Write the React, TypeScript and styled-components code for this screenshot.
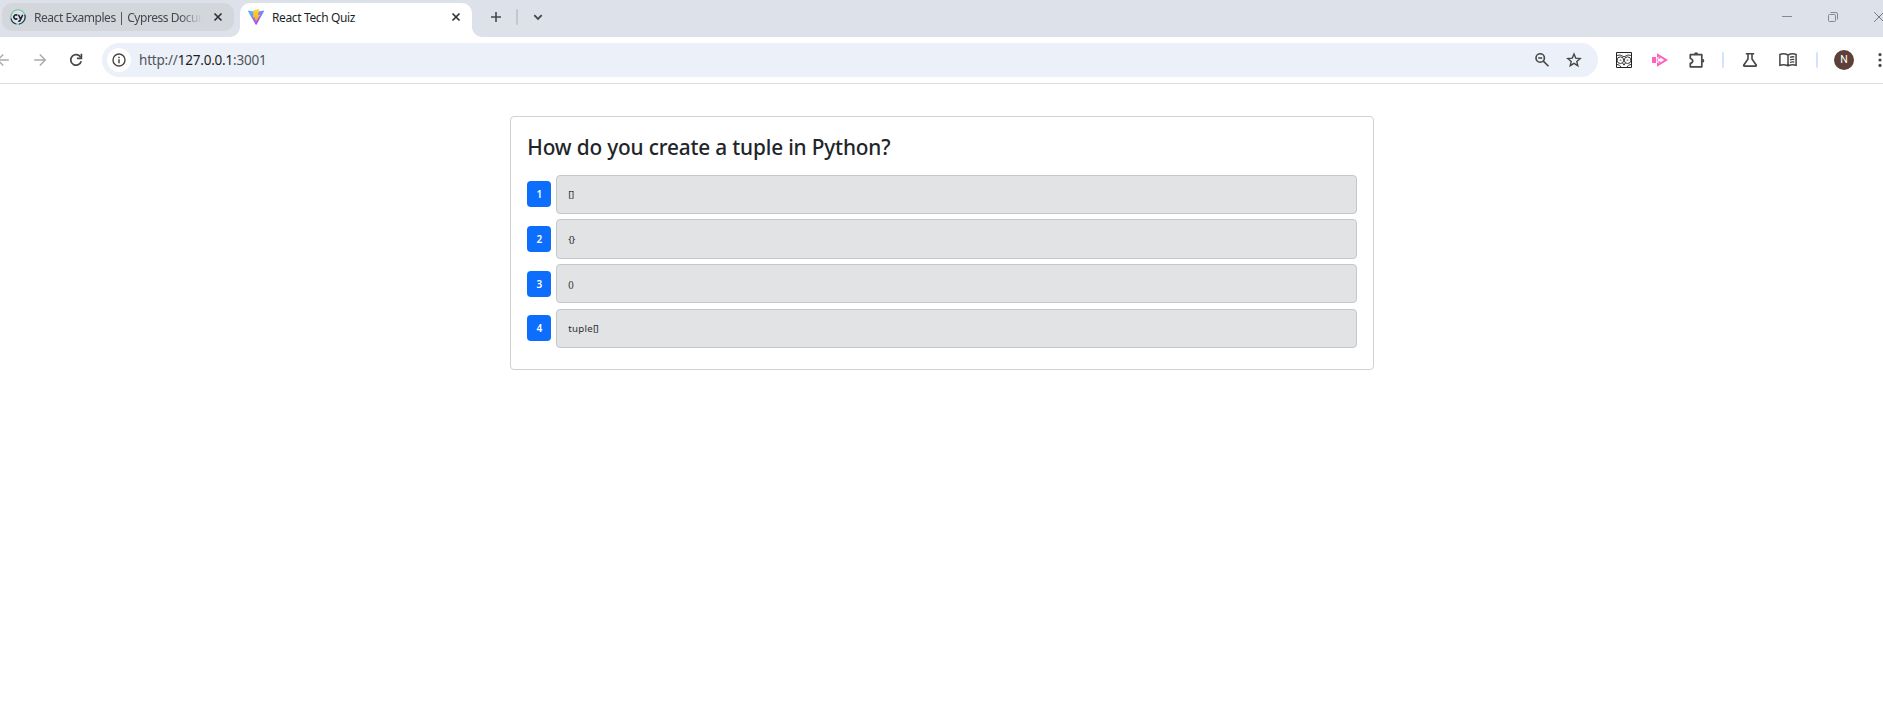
import React from "react";
import styled, { createGlobalStyle, css } from "styled-components";

const GlobalStyle = createGlobalStyle`
  * { box-sizing: border-box; }
  body { margin: 0; background: #fff; overflow: hidden; }
  #root { font-family: "Noto Sans", "Open Sans", sans-serif; color: #212529; }
`;

const Window = styled.div`
  display: flex;
  flex-direction: column;
  width: 100%;
  height: 712px;
  overflow: hidden;
  background: #fff;
`;

const TabStrip = styled.header`
  display: flex;
  align-items: flex-start;
  flex: none;
  height: 37px;
  padding: 3px 0 0 2px;
  background: #dde1e9;
  overflow: hidden;
`;

const Tab = styled.div<{ $active?: boolean }>`
  position: relative;
  display: flex;
  align-items: center;
  flex: none;
  width: 232px;
  height: 28px;
  padding: 0 8px;
  border-radius: 10px;
  background: #d3d7dc;
  color: #45484b;
  font-size: 12px;
  ${(p) =>
    p.$active &&
    css`
      height: 34px;
      margin-left: 6px;
      padding-bottom: 6px;
      border-radius: 10px 10px 0 0;
      background: #fff;
      color: #1f1f1f;
      &::before,
      &::after {
        content: "";
        position: absolute;
        bottom: 0;
        width: 10px;
        height: 10px;
      }
      &::before {
        left: -10px;
        background: radial-gradient(circle at 0 0, transparent 9.5px, #fff 10.2px);
      }
      &::after {
        right: -10px;
        background: radial-gradient(circle at 100% 0, transparent 9.5px, #fff 10.2px);
      }
    `}
`;

const TabTitle = styled.span<{ $fade?: boolean; $spacing: number }>`
  flex: 1;
  margin: 1px 8px 0;
  overflow: hidden;
  white-space: nowrap;
  line-height: 18px;
  letter-spacing: ${(p) => p.$spacing}px;
  ${(p) =>
    p.$fade &&
    css`
      mask-image: linear-gradient(to right, #000 146px, transparent 168px);
    `}
`;

const Slot = styled.span<{ $w: number }>`
  display: flex;
  align-items: center;
  justify-content: center;
  flex: none;
  width: ${(p) => p.$w}px;
  height: 28px;
`;

const NewTabSlot = styled(Slot)`
  margin-left: 4px;
`;

const Divider = styled.span<{ $color: string }>`
  width: 2px;
  height: 16px;
  border-radius: 1px;
  background: ${(p) => p.$color};
`;

const WindowControls = styled.div`
  display: flex;
  margin-left: auto;
  margin-right: -19px;
`;

const Toolbar = styled.nav`
  display: flex;
  align-items: center;
  flex: none;
  height: 47px;
  border-bottom: 1px solid #dcdfe3;
`;

const NavButtons = styled.div`
  display: flex;
  flex: none;
  width: 102px;
`;

const BackSlot = styled(Slot)`
  margin-left: -15px;
`;

const AddressBar = styled.div`
  display: flex;
  align-items: center;
  flex: none;
  width: 1496px;
  height: 34px;
  padding: 0 8px 0 5px;
  border-radius: 17px;
  background: #ecf0f9;
`;

const SiteInfo = styled.span`
  display: flex;
  align-items: center;
  justify-content: center;
  width: 24px;
  height: 24px;
  border-radius: 50%;
  background: #fff;
`;

const Url = styled.span`
  flex: 1;
  margin-left: 8px;
  color: #50545a;
  font-size: 13.5px;
  line-height: 20px;
  letter-spacing: -0.2px;
  b {
    color: #1f1f1f;
    font-weight: 400;
  }
`;

const Extensions = styled.div`
  display: flex;
  flex: none;
  margin-left: 8px;
`;

const Avatar = styled.span`
  width: 20px;
  height: 20px;
  border-radius: 50%;
  background: #5d4037;
  color: #fff;
  font: 10.5px/20px Roboto, sans-serif;
  text-align: center;
`;

const Page = styled.main`
  display: flex;
  justify-content: center;
  align-items: flex-start;
  flex: 1;
  padding: 32px 0 0 1px;
`;

const Card = styled.section`
  width: 863.5px;
  height: 254px;
  padding: 16.3px 16px 0;
  border: 1px solid #cfd1d3;
  border-radius: 4px;
`;

const Question = styled.h2`
  margin: 0 0 11.37px;
  height: 30px;
  font-size: 20.8px;
  font-weight: 500;
  line-height: 28px;
  letter-spacing: -0.16px;
  white-space: nowrap;
`;

const Answers = styled.div`
  display: grid;
  gap: 5.33px;
`;

const Answer = styled.div`
  display: flex;
  align-items: center;
  gap: 5px;
  height: 39.34px;
`;

const AnswerButton = styled.button`
  flex: none;
  width: 24px;
  height: 26px;
  padding: 0;
  border: 0;
  border-radius: 4px;
  background: #0d6efd;
  color: #fff;
  font: 600 10px/26px "Noto Sans", sans-serif;
`;

const AnswerText = styled.div`
  flex: 1;
  height: 100%;
  padding: 0.55px 11px 0;
  border: 1px solid #c4c8cb;
  border-radius: 4px;
  background: #e2e3e5;
  color: #2b2f32;
  font-size: 9.7px;
  line-height: 37px;
  letter-spacing: 0.25px;
`;

const Brackets = styled.span`
  letter-spacing: -0.5px;
`;

const stroke = { fill: "none", stroke: "#474747", strokeWidth: 1.6 };

const Cross = () => (
  <svg width="10" height="10" viewBox="0 0 10 10" stroke="#303236" strokeWidth="1.7">
    <path d="M1.5 1.5l7 7M8.5 1.5l-7 7" />
  </svg>
);

const CypressLogo = () => (
  <svg width="16" height="16" viewBox="0 0 16 16" fill="none">
    <circle cx="8" cy="8" r="7.2" fill="#dfe3e7" stroke="#69c3a7" strokeWidth="1.1" />
    <path d="M14.8 5.8A7.2 7.2 0 0 1 9 15.1M1 9.5a7.2 7.2 0 0 0 5.3 5.5" stroke="#26354a" strokeWidth="1.2" />
    <path d="M7.4 6.4A2.1 2.1 0 1 0 7.4 9.5M8.5 5.7l2 4.3M12.7 5.7l-2.4 5.4q-.6 1.5-2.1 1.2" stroke="#1b1e2e" strokeWidth="1.5" />
  </svg>
);

const ViteLogo = () => (
  <svg width="16" height="16" viewBox="0 0 16 16">
    <defs>
      <linearGradient id="viteShield" x1="0" y1="0" x2=".6" y2="1">
        <stop offset="0" stopColor="#41c9ff" />
        <stop offset="1" stopColor="#b33bfe" />
      </linearGradient>
      <linearGradient id="viteBolt" x1="0" y1="0" x2="0" y2="1">
        <stop offset="0" stopColor="#ffd83a" />
        <stop offset="1" stopColor="#ffa800" />
      </linearGradient>
    </defs>
    <path d="M15.9 2.4L8.6 15.5a.6.6 0 0 1-1 0L.1 2.4q-.2-.8.6-.8L8 2.9l7.3-1.3q.8 0 .6.8z" fill="url(#viteShield)" />
    <path d="M11.6 0L5.4 1.2 5 8.6l2.2-.4-.5 2.7 1.4-.3-.8 3.2 5-8.4-2.6.5z" fill="url(#viteBolt)" />
  </svg>
);

const Plus = () => (
  <svg width="12" height="12" viewBox="0 0 12 12" {...stroke}>
    <path d="M6 1v10M1 6h10" />
  </svg>
);

const Chevron = () => (
  <svg width="10" height="10" viewBox="0 0 10 10" {...stroke} strokeWidth="1.8">
    <path d="M1.3 3.2L5 6.9l3.7-3.7" />
  </svg>
);

const Arrow = ({ flip }: { flip?: boolean }) => (
  <svg width="14" height="14" viewBox="0 0 14 14" {...stroke} stroke="#aaabad" strokeWidth="1.5">
    <path d={flip ? "M1.2 7h11M6.8 1.5L12.3 7l-5.5 5.5" : "M12.8 7h-11M7.2 1.5L1.7 7l5.5 5.5"} />
  </svg>
);

const Reload = () => (
  <svg width="14" height="14" viewBox="0 0 14 14" {...stroke} strokeWidth="1.7">
    <path d="M11.7 4.3A5.3 5.3 0 1 0 12.2 8.2" />
    <path d="M12.4.8v4.5H7.9" />
  </svg>
);

const Info = () => (
  <svg width="14" height="14" viewBox="0 0 14 14" {...stroke} strokeWidth="1.4">
    <circle cx="7" cy="7" r="6" />
    <path d="M7 6.2v4M7 3.7v1.5" strokeWidth="1.5" />
  </svg>
);

const ZoomOut = () => (
  <svg width="16" height="16" viewBox="0 0 16 16" {...stroke}>
    <circle cx="6.2" cy="6" r="4.2" />
    <path d="M9.3 9.1l5.2 5.2M4.2 6h4" />
  </svg>
);

const Star = () => (
  <svg width="16" height="16" viewBox="0 0 16 16" {...stroke} strokeWidth="1.4">
    <path d="M8 2.1l1.7 4 4.5.4-3.4 2.9 1 4.3L8 11.4l-3.8 2.3 1-4.3-3.4-2.9 4.5-.4z" />
  </svg>
);

const Owl = () => (
  <svg width="16" height="16" viewBox="0 0 16 16" fill="none" stroke="#222" strokeWidth=".9">
    <path d="M.5.5h15v15H.5z" strokeWidth="1" />
    <path d="M.5 3.4Q4 2 8 4.8q4-2.8 7.5-1.4M1 12.4q3 .3 4 2.8M15 12.4q-3 .3-4 2.8M6.7 11L8 13.2 9.3 11" />
    <circle cx="4.4" cy="8.2" r="3.3" />
    <circle cx="11.6" cy="8.2" r="3.3" />
    <path d="M3.6 8.2h1.8M10.6 8.2h1.8" strokeWidth="1.4" stroke="#888" />
  </svg>
);

const PinkPlay = () => (
  <svg width="16" height="14" viewBox="0 0 16 14">
    <path d="M0 4h4v6H0z" fill="#ff5fbf" />
    <path d="M5 .2L16 7 5 13.8V9.4h1.6v1.4L12.2 7 6.6 3.2v1.4H5z" fill="#ff5fbf" />
    <path d="M6.6 3.2L9.2 5l-2.6 1zM6.6 10.8L9.2 9 6.6 8zM4.8 5.5h1v3h-1z" fill="#ff5fbf" />
  </svg>
);

const Puzzle = () => (
  <svg width="17" height="17" viewBox="0 0 17 17" {...stroke} strokeWidth="1.7">
    <path d="M1.3 2.7h11.5v12.1H1.3v-3.4c3.2-.7 3.2-4.2 0-4.9z" strokeLinejoin="round" />
    <path d="M5.1 2.3a2 2 0 0 1 4 0zM13.3 6.8a2 2 0 0 1 0 4z" fill="#474747" stroke="none" />
  </svg>
);

const Flask = () => (
  <svg width="16" height="16" viewBox="0 0 16 16" {...stroke}>
    <path d="M3.8 1.8h8.4M6 2v5L1.7 13.2q-.2.9.6.9h11.4q.8 0 .6-.9L10 7V2" />
  </svg>
);

const Book = () => (
  <svg width="18" height="14" viewBox="0 0 18 14" {...stroke} strokeWidth="1.5">
    <path d="M9 2Q5 0 .9 1.5v10.7Q5 11 9 12.8 13 11 17.1 12.2V1.5Q13 0 9 2zM9 2v10.8" />
    <path d="M11 4.3q2-.8 4.3-.4M11 6.9q2-.8 4.3-.4M11 9.5q2-.8 4.3-.4" strokeWidth="1.3" />
  </svg>
);

const Kebab = () => (
  <svg width="4" height="16" viewBox="0 0 4 16" fill="#474747">
    <circle cx="2" cy="2.6" r="1.6" />
    <circle cx="2" cy="8" r="1.6" />
    <circle cx="2" cy="13.4" r="1.6" />
  </svg>
);

const Minimize = () => (
  <svg width="10" height="10" viewBox="0 0 10 10" stroke="#85888d">
    <path d="M0 4.5h10" />
  </svg>
);

const Restore = () => (
  <svg width="10" height="10" viewBox="0 0 10 10" fill="none" stroke="#85888d">
    <rect x=".5" y="2.5" width="7" height="7" rx="1" />
    <path d="M2.5.5H8q1.5 0 1.5 1.5v5.5" />
  </svg>
);

const CloseWindow = () => (
  <svg width="10" height="10" viewBox="0 0 10 10" stroke="#75787d">
    <path d="M.2.2l9.6 9.6M9.8.2L.2 9.8" />
  </svg>
);

const answers = [
  { word: "", brackets: "[]" },
  { word: "", brackets: "{}" },
  { word: "", brackets: "()" },
  { word: "tuple", brackets: "[]" },
];

export default function App() {
  return (
    <>
      <GlobalStyle />
      <Window>
        <TabStrip>
          <Tab>
            <CypressLogo />
            <TabTitle $fade $spacing={-0.46}>React Examples | Cypress Docum</TabTitle>
            <Slot $w={16}><Cross /></Slot>
          </Tab>
          <Tab $active>
            <ViteLogo />
            <TabTitle $spacing={-0.37}>React Tech Quiz</TabTitle>
            <Slot $w={16}><Cross /></Slot>
          </Tab>
          <NewTabSlot $w={40}><Plus /></NewTabSlot>
          <Slot $w={2}><Divider $color="#c5c7ca" /></Slot>
          <Slot $w={40}><Chevron /></Slot>
          <WindowControls>
            <Slot $w={46}><Minimize /></Slot>
            <Slot $w={46}><Restore /></Slot>
            <Slot $w={46}><CloseWindow /></Slot>
          </WindowControls>
        </TabStrip>
        <Toolbar>
          <NavButtons>
            <BackSlot $w={36}><Arrow /></BackSlot>
            <Slot $w={38}><Arrow flip /></Slot>
            <Slot $w={34}><Reload /></Slot>
          </NavButtons>
          <AddressBar>
            <SiteInfo><Info /></SiteInfo>
            <Url>http://<b>127.0.0.1</b>:3001</Url>
            <Slot $w={32}><ZoomOut /></Slot>
            <Slot $w={32}><Star /></Slot>
          </AddressBar>
          <Extensions>
            <Slot $w={36}><Owl /></Slot>
            <Slot $w={36}><PinkPlay /></Slot>
            <Slot $w={38}><Puzzle /></Slot>
            <Slot $w={14}><Divider $color="#d3e3fd" /></Slot>
            <Slot $w={40}><Flask /></Slot>
            <Slot $w={36}><Book /></Slot>
            <Slot $w={22}><Divider $color="#d3e3fd" /></Slot>
            <Slot $w={32}><Avatar>N</Avatar></Slot>
            <Slot $w={40}><Kebab /></Slot>
          </Extensions>
        </Toolbar>
        <Page>
          <Card>
            <Question>How do you create a tuple in Python?</Question>
            <Answers>
              {answers.map(({ word, brackets }, i) => (
                <Answer key={word + brackets}>
                  <AnswerButton>{i + 1}</AnswerButton>
                  <AnswerText>
                    {word}
                    <Brackets>{brackets}</Brackets>
                  </AnswerText>
                </Answer>
              ))}
            </Answers>
          </Card>
        </Page>
      </Window>
    </>
  );
}
